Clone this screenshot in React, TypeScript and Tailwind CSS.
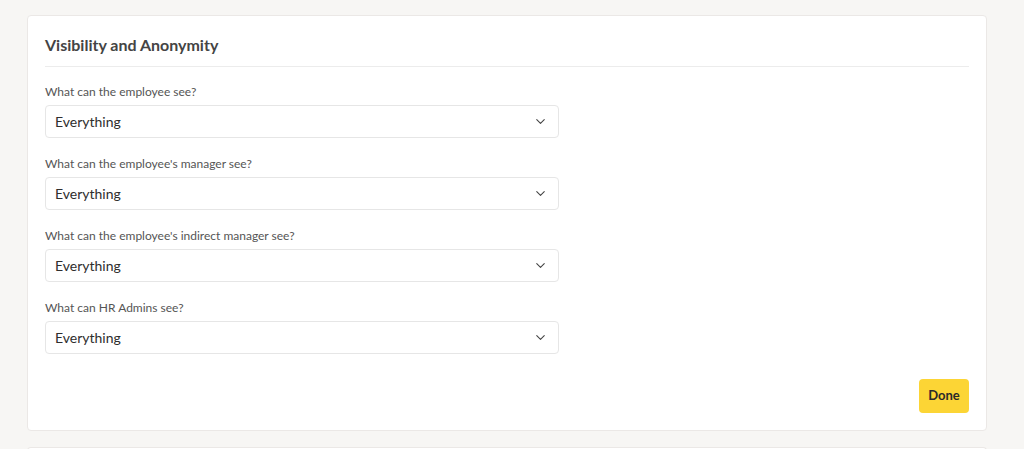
import { ChevronDown } from 'lucide-react'

const QUESTIONS = [
  'What can the employee see?',
  "What can the employee's manager see?",
  "What can the employee's indirect manager see?",
  'What can HR Admins see?',
]

function SelectField({ label }: { label: string }) {
  return (
    <div className="mt-[18px] first:mt-[17px]">
      <p className="text-[12px] leading-4 text-[#555]">{label}</p>
      <button className="mt-[5px] w-[514px] h-[33px] flex items-center justify-between pl-[9px] pr-[10px] bg-white border border-[#e6e6e6] rounded-[4px] text-left">
        <span className="text-[14px] text-[#2e2e2e]">Everything</span>
        <ChevronDown size={15} strokeWidth={1.75} className="text-[#444]" />
      </button>
    </div>
  )
}

export default function App() {
  return (
    <div className="min-h-screen bg-[#f7f6f4] pt-[15px] pl-[27px] pr-[37px] overflow-hidden" style={{ fontFamily: 'Lato, "Noto Sans", sans-serif' }}>
      <div className="w-[960px] bg-white border border-[#ebe8e6] rounded-[4px] px-[17px] pt-[17px] pb-[17px]">
        <div className="pb-[9px] border-b border-[#ececec]">
          <h2 className="text-[16px] leading-6 font-bold text-[#444]">Visibility and Anonymity</h2>
        </div>
        <div className="flex flex-col">
          {QUESTIONS.map(q => (
            <SelectField key={q} label={q} />
          ))}
        </div>
        <div className="flex justify-end mt-[25px]">
          <button className="h-[34px] w-[50px] rounded-[4px] bg-[#fcd535] text-[13px] font-bold text-[#2a2a2a]">Done</button>
        </div>
      </div>
      <div className="mt-[16px] w-[960px] h-[20px] bg-white border-t border-x border-[#ebe8e6] rounded-t-[4px]" />
    </div>
  )
}
